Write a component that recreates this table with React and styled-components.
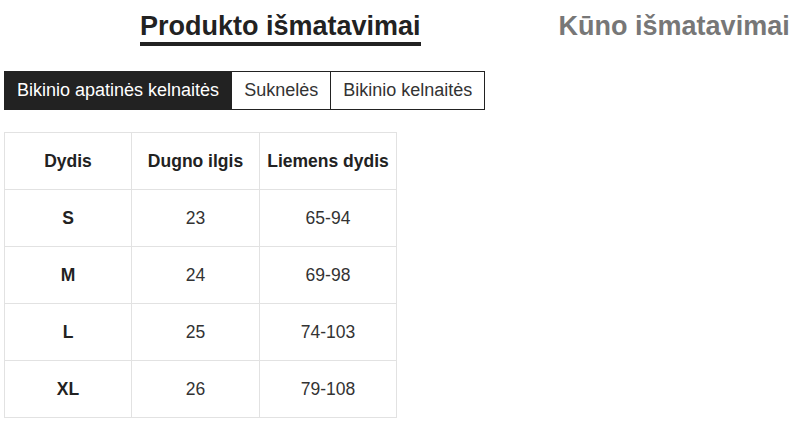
import React, { useState } from 'react';
import styled, { createGlobalStyle } from 'styled-components';

const GlobalStyle = createGlobalStyle`
    body {
        margin: 0;
        background: #fff;
        font-family: "Liberation Sans", Arial, sans-serif;
        overflow: hidden;
    }
`;

const categories = ['Bikinio apatinės kelnaitės', 'Suknelės', 'Bikinio kelnaitės'];

const rows = [
    { size: 'S', length: '23', waist: '65-94' },
    { size: 'M', length: '24', waist: '69-98' },
    { size: 'L', length: '25', waist: '74-103' },
    { size: 'XL', length: '26', waist: '79-108' },
];

function App() {
    const [ section, setSection ] = useState('product');
    const [ category, setCategory ] = useState(0);

    return (
        <Page>
            <GlobalStyle />
            <Headings>
                <Heading active={ section === 'product' } onClick={ () => setSection('product') }>
                    Produkto išmatavimai
                </Heading>
                <Heading active={ section === 'body' } onClick={ () => setSection('body') }>
                    Kūno išmatavimai
                </Heading>
            </Headings>
            <Tabs>
                {categories.map((name, idx) => (
                    <Tab key={ `tab-${idx}` } active={ category === idx } onClick={ () => setCategory(idx) }>
                        {name}
                    </Tab>
                ))}
            </Tabs>
            <SizeTable>
                <colgroup>
                    <col style={ { width: 127 } } />
                    <col style={ { width: 128 } } />
                    <col style={ { width: 137 } } />
                </colgroup>
                <thead>
                    <tr>
                        <th>Dydis</th>
                        <th>Dugno ilgis</th>
                        <th>Liemens dydis</th>
                    </tr>
                </thead>
                <tbody>
                    {rows.map((row) => (
                        <tr key={ row.size }>
                            <th>{row.size}</th>
                            <td>{row.length}</td>
                            <td>{row.waist}</td>
                        </tr>
                    ))}
                </tbody>
            </SizeTable>
        </Page>
    );
}

const Page = styled.div`
    padding: 0 4px;
    width: 795px;
    box-sizing: border-box;
`;

const Headings = styled.div`
    display: flex;
    gap: 138px;
    padding-left: 136px;
    white-space: nowrap;
`;

const Heading = styled.div`
    padding-top: 11px;
    font-size: 27px;
    line-height: 31px;
    font-weight: bold;
    cursor: pointer;
    color: ${props => props.active ? '#222' : '#777'};
    border-bottom: 4px solid ${props => props.active ? '#222' : 'transparent'};
`;

const Tabs = styled.div`
    display: flex;
    margin-top: 25px;
`;

const Tab = styled.button`
    font-family: inherit;
    font-size: 18px;
    line-height: 21px;
    padding: 8px 12px;
    border: 1px solid #222;
    border-left-width: 0;
    background: ${props => props.active ? '#222' : '#fff'};
    color: ${props => props.active ? '#fff' : '#333'};
    cursor: pointer;

    &:first-child {
        border-left-width: 1px;
    }
`;

const SizeTable = styled.table`
    margin-top: 22px;
    border-collapse: collapse;
    table-layout: fixed;
    width: 392px;

    th, td {
        border: 1px solid #e2e2e2;
        height: 56px;
        padding: 0;
        text-align: center;
        font-size: 17.5px;
        color: #333;
        white-space: nowrap;
    }

    th {
        font-weight: bold;
        color: #222;
    }
`;

export default App;
